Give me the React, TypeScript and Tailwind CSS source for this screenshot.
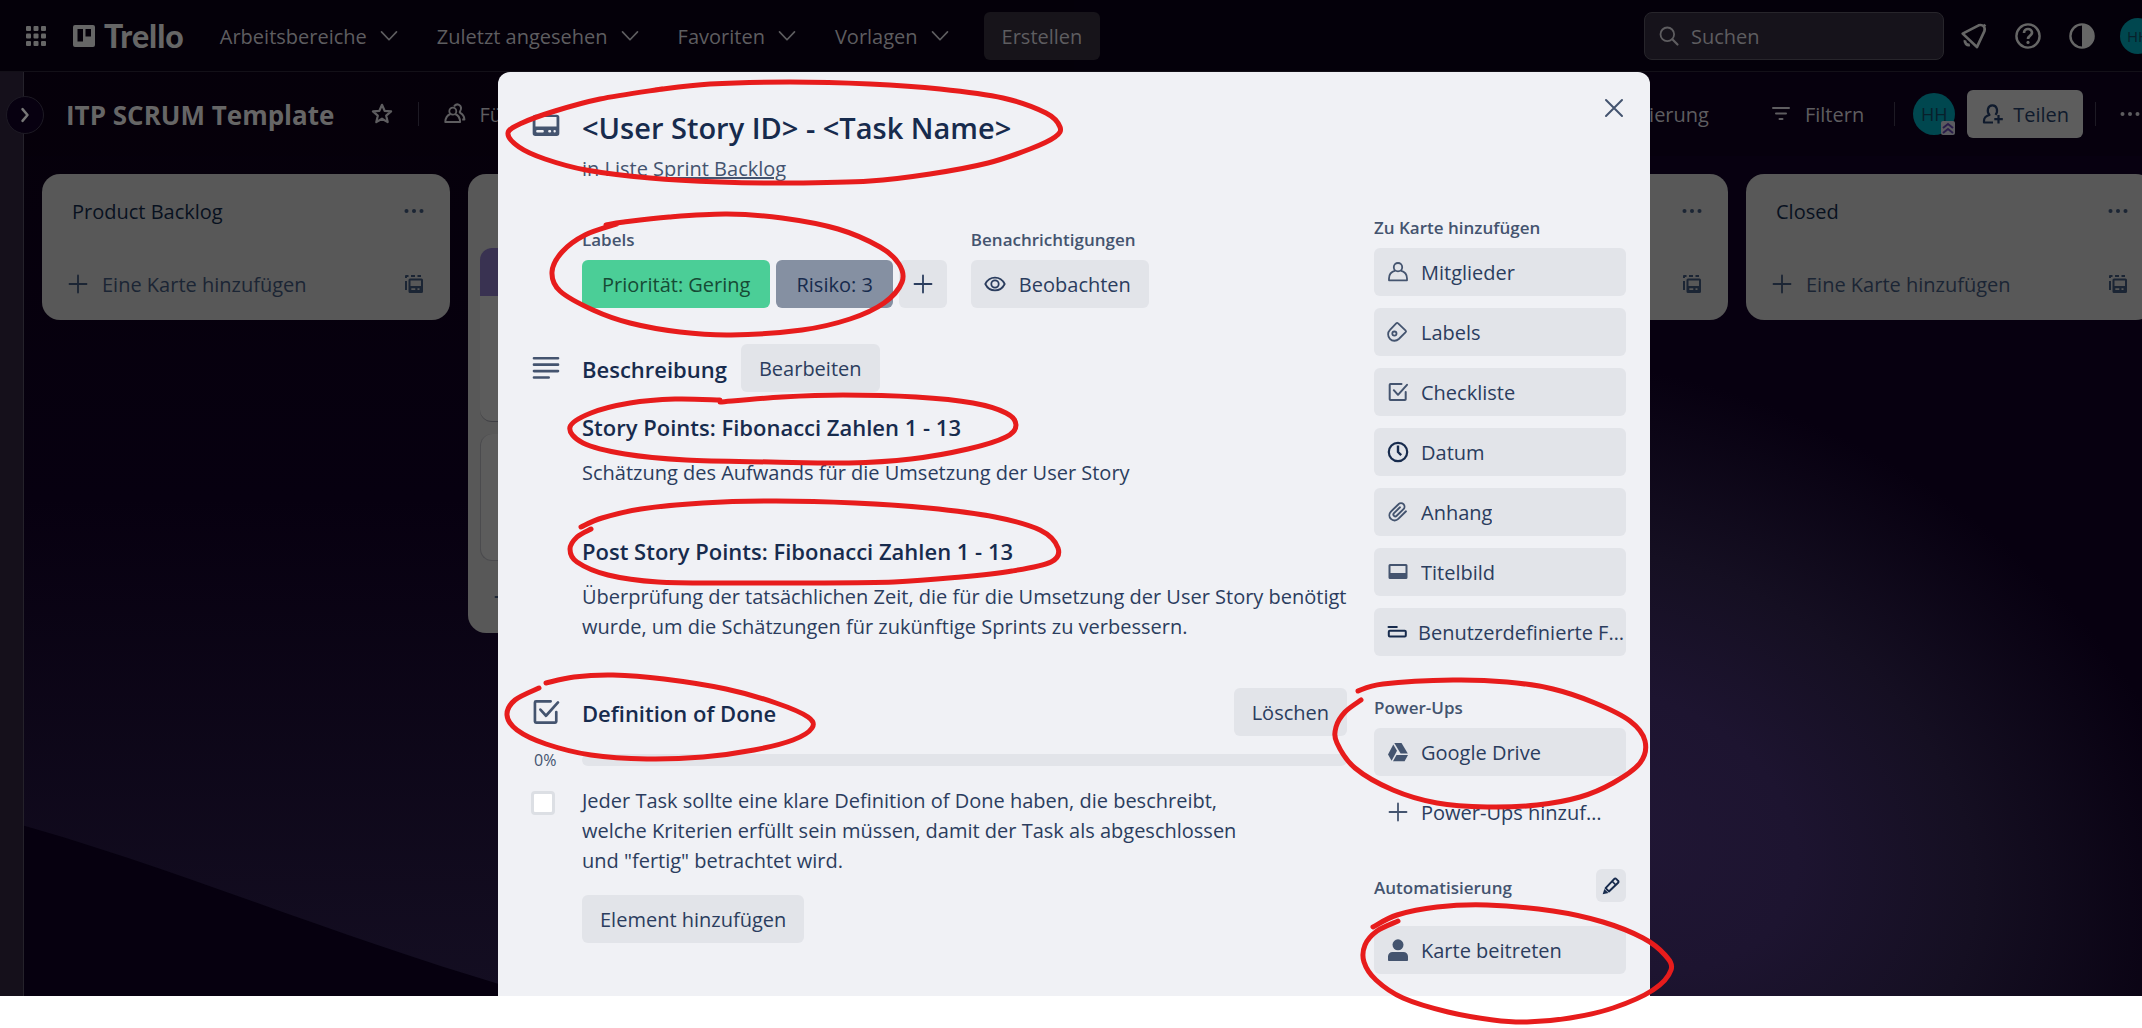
import type { ReactNode } from "react";

type IconProps = { className?: string };

function Svg({ className = "size-6", children }: { className?: string; children: ReactNode }) {
  return (
    <svg viewBox="0 0 24 24" fill="none" stroke="currentColor" strokeWidth="1.8" strokeLinejoin="round" className={`${className} shrink-0`} aria-hidden="true">
      {children}
    </svg>
  );
}

const Chevron = () => (
  <Svg className="size-5">
    <path d="M3 7l9 9.5L21 7" strokeLinecap="round" strokeWidth="2" />
  </Svg>
);

const AppGrid = () => (
  <Svg className="size-6">
    {[2, 9.5, 17].map((y) => [2, 9.5, 17].map((x) => <rect key={`${x}-${y}`} x={x} y={y} width="5" height="5" rx="1" fill="currentColor" stroke="none" />))}
  </Svg>
);

const TrelloMark = () => (
  <Svg className="size-6">
    <path fillRule="evenodd" fill="currentColor" stroke="none" d="M3 1h18a2 2 0 0 1 2 2v18a2 2 0 0 1-2 2H3a2 2 0 0 1-2-2V3a2 2 0 0 1 2-2zm2.5 4v12.5H11V5zm8 0v7.5H19V5z" />
  </Svg>
);

const CardIcon = ({ className = "size-8" }: IconProps) => (
  <Svg className={className}>
    <path fillRule="evenodd" fill="currentColor" stroke="none" d="M4 3.500h16a2 2 0 0 1 2 2v12a2 2 0 0 1-2 2H4a2 2 0 0 1-2-2v-12a2 2 0 0 1 2-2zm.1 1.800v7h15.800v-7zM5.500 15a.9.900 0 1 0 0 1.800h4a.9.900 0 1 0 0-1.800zm9 0a.9.900 0 1 0 0 1.800h.5a.9.900 0 1 0 0-1.800zm4 0a.9.900 0 1 0 0 1.800.9.900 0 0 0 0-1.800z" />
  </Svg>
);

const TemplateIcon = () => (
  <Svg className="size-6">
    <path d="M4 18V9M4 6V4h2.500M9 4h4M15.500 4H19" strokeWidth="2" />
    <path fillRule="evenodd" fill="currentColor" stroke="none" d="M8 6.500h11.500A1.500 1.500 0 0 1 21 8v11.500a1.500 1.500 0 0 1-1.500 1.500H8a1.500 1.500 0 0 1-1.500-1.500V8A1.500 1.500 0 0 1 8 6.500zm.5 2v5.500H19V8.500zm.8 7.700v1.800h4v-1.800zm6.200 0v1.800h2v-1.800z" />
  </Svg>
);

const Dots = () => (
  <Svg className="size-6">
    <g fill="currentColor" stroke="none">
      <circle cx="4.500" cy="12" r="2" />
      <circle cx="12" cy="12" r="2" />
      <circle cx="19.500" cy="12" r="2" />
    </g>
  </Svg>
);

const Plus = () => (
  <Svg className="size-6">
    <path d="M12 3.500v17M3.500 12h17" strokeLinecap="round" />
  </Svg>
);

const Star = () => (
  <Svg className="size-6">
    <path d="M12 2.800l2.600 6 6.500.6-4.900 4.300 1.500 6.400L12 16.700l-5.700 3.400 1.500-6.400-4.900-4.300 6.500-.6z" strokeWidth="2.200" />
  </Svg>
);

const People = () => (
  <Svg className="size-6">
    <circle cx="9.800" cy="9.200" r="3.500" />
    <path d="M7.500 12C4.500 13 2.500 15.500 2.300 20h14.800c-.2-4.500-2-7-5-8" strokeWidth="2" />
    <path d="M11 4.500c1.200-2 3.200-2.500 5-1.700 2.200 1 2.700 4 1.200 6.200-.7 1-.6 1.500.4 2.200 2.400 1.400 3.600 3 3.800 6.300h-2.200" strokeWidth="2" />
  </Svg>
);

const Filter = () => (
  <Svg className="size-6">
    <path d="M4 6h16M7 11.500h10M10.500 17h3" strokeWidth="2" strokeLinecap="round" />
  </Svg>
);

const ShareUser = () => (
  <Svg className="size-6">
    <path d="M12 20.500H3v-1.800c0-3 2-4.700 5.500-5.700-3-3.500-2-9.500 2.800-9.700 5-.1 6 6 3.200 9.600M17.500 13v8.500M13.300 17.200h8.500" strokeWidth="2.200" />
  </Svg>
);

const Search = () => (
  <Svg className="size-6">
    <circle cx="10.300" cy="10.300" r="6.800" />
    <path d="M15.300 15.300l5.200 5.200" strokeWidth="2.200" strokeLinecap="round" />
  </Svg>
);

const Bell = () => (
  <Svg className="size-8">
    <path d="M3.500 10.200l12-6.200c3-1 5.200 1.200 4.300 4.300L14.200 20.300z" strokeWidth="2" />
    <path d="M5.300 15.200c-.6 2 1.400 4 3.600 3.500" strokeWidth="2.200" />
    <path d="M19 5l1.500-1.500" strokeWidth="2" />
  </Svg>
);

const Help = () => (
  <Svg className="size-8">
    <circle cx="12" cy="12" r="8.700" />
    <path d="M9 9.800c0-4 6-4 6-.2 0 2.200-3 2-3 4.700" strokeWidth="2" />
    <circle cx="12" cy="16.800" r="1.200" fill="currentColor" stroke="none" />
  </Svg>
);

const Contrast = () => (
  <Svg className="size-8">
    <circle cx="12" cy="12" r="8.700" />
    <path d="M12 3.500a8.500 8.500 0 0 1 0 17z" fill="currentColor" stroke="none" />
  </Svg>
);

const Member = () => (
  <Svg>
    <circle cx="12" cy="7.200" r="4.200" />
    <path d="M9.300 10.600C5.500 11.600 3 14.600 3 18.400v1.900h18v-1.900c0-3.800-2.500-6.800-6.300-7.800" />
  </Svg>
);

const Tag = () => (
  <Svg>
    <path d="M10.200 3.300a1.300 1.300 0 0 1 1.900 0l7.600 7.300a1 1 0 0 1 0 1.500l-6.900 6.900a6.300 6.300 0 0 1-8.900-.2 6.300 6.300 0 0 1 .1-8.900z" />
    <circle cx="8.400" cy="13.600" r="2.100" />
  </Svg>
);

const Check = ({ className = "size-6" }: IconProps) => (
  <Svg className={className}>
    <path d="M15.500 4H4.500a.8.800 0 0 0-.8.800v14.400c0 .5.300.8.800.8h14.400c.5 0 .8-.3.800-.8V12" strokeWidth="2" strokeLinecap="round" />
    <path d="M7.800 10.200l4.200 4.600 9-10" strokeWidth="2" strokeLinecap="round" />
  </Svg>
);

const Clock = () => (
  <Svg className="size-6 text-[#172b4d]">
    <circle cx="12" cy="12" r="9.200" strokeWidth="2.200" />
    <path d="M12 5.500V12l3.200 3.200" strokeWidth="2.400" />
  </Svg>
);

const Clip = () => (
  <Svg>
    <path d="M20 11.300l-7.700 7.600a5.200 5.200 0 0 1-7.400 0 5.200 5.200 0 0 1 0-7.300l7.600-7.400a3.500 3.500 0 0 1 5 0 3.500 3.500 0 0 1 0 4.900l-6.800 6.700a1.900 1.900 0 0 1-2.700-2.700l6-5.800" strokeLinecap="round" strokeWidth="1.900" />
  </Svg>
);

const Cover = () => (
  <Svg>
    <path fillRule="evenodd" fill="currentColor" stroke="none" d="M4 4h16a1.500 1.500 0 0 1 1.500 1.500v12A1.500 1.500 0 0 1 20 19H4a1.500 1.500 0 0 1-1.500-1.500v-12A1.500 1.500 0 0 1 4 4zm.5 2v7h15V6z" />
  </Svg>
);

const Fields = () => (
  <Svg className="size-6 text-[#172b4d]">
    <path d="M2.500 7h8.300" strokeWidth="2" strokeLinecap="round" />
    <rect x="2.800" y="10.800" width="17" height="5.800" rx="1" strokeWidth="2" />
  </Svg>
);

const Drive = () => (
  <Svg className="size-6">
    <g fill="currentColor" stroke="none">
      <path d="M8.300 3h7.200l6.300 10.600h-7.200z" />
      <path d="M7.300 4.500l3.700 6.200-5.400 10L2 14.500z" />
      <path d="M10.500 15H22l-3.400 6.200H7z" />
    </g>
  </Svg>
);

const Person = () => (
  <Svg className="size-6">
    <g fill="currentColor" stroke="none">
      <circle cx="12" cy="6.800" r="5.500" />
      <path d="M2 22v-3.500a4.500 4.500 0 0 1 4.500-4.500h11a4.500 4.500 0 0 1 4.500 4.500V22a.9.900 0 0 1-1 .9H3a.9.900 0 0 1-1-.9z" />
    </g>
  </Svg>
);

const Pencil = () => (
  <Svg className="size-5">
    <path d="M5.500 14.500L16 3.500a1.500 1.500 0 0 1 2.200 0l2.300 2.300a1.500 1.500 0 0 1 0 2.200L9.500 18.500z" strokeWidth="2.400" />
    <path d="M4 15.500l5 5L2 22z" fill="currentColor" stroke="none" />
    <path d="M13.500 6.500l4 4" strokeWidth="2" />
  </Svg>
);

const Eye = () => (
  <Svg>
    <path d="M2.300 12C6.500 3.500 17.500 3.500 21.700 12 17.500 20.500 6.500 20.500 2.300 12z" />
    <circle cx="12" cy="12" r="3.700" />
  </Svg>
);

const Lines = () => (
  <Svg className="size-8">
    <path d="M3 4.700h18M3 9.500h18M3 14.300h18M3 19.100h11" strokeWidth="2" strokeLinecap="round" />
  </Svg>
);

const Close = () => (
  <Svg>
    <path d="M4 4l16 16M20 4L4 20" strokeWidth="2" strokeLinecap="round" />
  </Svg>
);

function Backdrop() {
  return (
    <svg viewBox="0 0 2142 996" preserveAspectRatio="none" className="absolute inset-0 size-full" aria-hidden="true">
      <defs>
        <linearGradient id="sky" x1="0" y1="0" x2="0" y2="1">
          <stop offset="0" stopColor="#050009" />
          <stop offset="0.500" stopColor="#070010" />
          <stop offset="1" stopColor="#140e22" />
        </linearGradient>
        <radialGradient id="glow" gradientUnits="userSpaceOnUse" cx="0" cy="0" r="1" gradientTransform="translate(1620 830) rotate(22) scale(610 450)">
          <stop offset="0" stopColor="#201634" />
          <stop offset="0.300" stopColor="#1d1430" />
          <stop offset="0.600" stopColor="#150f22" />
          <stop offset="1" stopColor="#070010" />
        </radialGradient>
      </defs>
      <rect width="2142" height="996" fill="url(#sky)" />
      <path d="M0 819C180 868 340 940 540 996H0z" fill="#06000f" />
      <rect x="1074" y="0" width="1068" height="996" fill="url(#glow)" />
    </svg>
  );
}

function NavItem({ children }: { children: string }) {
  return (
    <button className="flex items-center gap-3">
      <span className="pt-0.5">{children}</span>
      <Chevron />
    </button>
  );
}

function Avatar({ className }: IconProps) {
  return <span className={`${className} flex shrink-0 items-center justify-center rounded-full bg-[#00474f] font-medium text-[#08202b]`}>HH</span>;
}

function List({ title, bare = false, children }: { title?: string; bare?: boolean; children?: ReactNode }) {
  return (
    <section className="flex w-[408px] shrink-0 flex-col rounded-[18px] bg-[#585858] text-[#1b2534]">
      <header className="flex h-[74px] items-center justify-between px-6 pl-[30px]">
        <h2 className="pt-0.5 font-medium text-[#08111f]">{title}</h2>
        <button aria-label="Listenaktionen">
          <Dots />
        </button>
      </header>
      {children}
      <footer className="flex h-[72px] items-center justify-between px-6">
        <button aria-label="Eine Karte hinzufügen" className="flex items-center gap-3">
          <Plus />
          {!bare && <span className="pt-0.5">Eine Karte hinzufügen</span>}
        </button>
        <button aria-label="Aus Vorlage erstellen">
          <TemplateIcon />
        </button>
      </footer>
    </section>
  );
}

const Divider = () => <span className="h-6 w-px bg-[#1d1a24]" />;

function Board() {
  return (
    <div className="relative flex flex-col overflow-hidden text-[20px] leading-[30px] text-[#5e5d60] [grid-area:1/1]">
      <Backdrop />
      <nav className="relative flex h-[72px] items-center border-b border-[#131018] bg-[#040009]/80 pl-6">
        <button aria-label="Weitere Apps" className="text-[#666]">
          <AppGrid />
        </button>
        <a href="#" className="ml-6 flex items-center gap-2 text-[32px] leading-9 font-black text-[#666]">
          <TrelloMark />
          <span className="font-['Lato']">Trello</span>
        </a>
        <div className="ml-9 flex gap-[38px]">
          <NavItem>Arbeitsbereiche</NavItem>
          <NavItem>Zuletzt angesehen</NavItem>
          <NavItem>Favoriten</NavItem>
          <NavItem>Vorlagen</NavItem>
        </div>
        <button className="ml-[34px] h-12 rounded-md bg-[#17141a] px-[18px] pt-0.5">Erstellen</button>
        <label className="ml-auto flex h-12 w-[300px] shrink-0 items-center gap-2.5 rounded-lg border border-[#27252b] bg-[#16131b] px-3">
          <Search />
          <input aria-label="Suchen" placeholder="Suchen" className="w-full pt-0.5 outline-none placeholder:text-[#5e5d60]" />
        </label>
        <div className="-mr-[14px] ml-[14px] flex shrink-0 items-center gap-[22px] text-[#666]">
          <button aria-label="Mitteilungen"><Bell /></button>
          <button aria-label="Hilfe"><Help /></button>
          <button aria-label="Design"><Contrast /></button>
          <Avatar className="size-9 text-[15px]" />
        </div>
      </nav>
      <div className="relative flex flex-1">
        <aside className="w-6 shrink-0 border-r border-[#25222b] bg-[#15101b]">
          <button aria-label="Seitenleiste öffnen" className="absolute top-6 left-1.5 flex size-[38px] items-center justify-center rounded-full border border-[#1d1a24] bg-[#070010] text-[#777]">
            <Svg className="size-5">
              <path d="M9 5l6 7-6 7" strokeWidth="3" strokeLinecap="round" />
            </Svg>
          </button>
        </aside>
        <div className="min-w-0 flex-1">
          <header className="flex h-[84px] items-center justify-between bg-[#050009]/50 pl-[42px]">
            <div className="flex items-center gap-6">
              <h1 className="pt-0.5 text-[26px] leading-9 font-bold text-[#666]">ITP SCRUM Template</h1>
              <button aria-label="Favorit" className="ml-3"><Star /></button>
              <Divider />
              <button className="flex items-center gap-3"><People /><span className="pt-0.5">Für alle</span></button>
            </div>
            <div className="flex shrink-0 items-center">
              <button className="pt-0.5">Automatisierung</button>
              <span className="ml-[30px]"><Divider /></span>
              <button className="mr-[30px] ml-[30px] flex items-center gap-3"><Filter /><span className="pt-0.5">Filtern</span></button>
              <Divider />
              <span className="relative ml-[18px] flex">
                <Avatar className="size-[42px] text-lg" />
                <svg viewBox="0 0 14 14" className="absolute right-0 bottom-0 size-3.5" aria-hidden="true">
                  <rect width="14" height="14" rx="2" fill="#5b5b60" />
                  <path d="M2 7l5-4 5 4M2 12l5-4 5 4" fill="none" stroke="#2a1d4a" strokeWidth="2" />
                </svg>
              </span>
              <button className="mr-3 ml-3 flex h-12 items-center gap-2 rounded-md bg-[#5d5d5d] px-3.5 text-[#0f1a2c]"><ShareUser /><span className="pt-0.5">Teilen</span></button>
              <Divider />
              <button aria-label="Menü" className="ml-[22px]"><Dots /></button>
            </div>
          </header>
          <div className="mt-[18px] flex items-start gap-[18px] pl-[18px]">
            <List title="Product Backlog" />
            <List bare>
              <div className="mx-3 flex flex-col gap-3">
                <article className="h-[174px] overflow-hidden rounded-xl border-b border-[#3f3f44] bg-[#5c5c5c]">
                  <div className="h-12 bg-[#393251]" />
                </article>
                <article className="h-[127px] rounded-xl border-b border-l border-[#4b4b4e] bg-[#5c5c5c]" />
              </div>
            </List>
            <List bare />
            <List bare />
            <List title="Closed" />
          </div>
        </div>
      </div>
    </div>
  );
}

function Button({ children, label, className = "px-[18px] pt-0.5" }: { children: ReactNode; label?: string; className?: string }) {
  return (
    <button aria-label={label} className={`${className} h-12 shrink-0 rounded-md bg-[#e2e4e9] text-[#2b3d5e]`}>
      {children}
    </button>
  );
}

function SideButton({ icon, children, plain = false, tight = false }: { icon: ReactNode; children: string; plain?: boolean; tight?: boolean }) {
  return (
    <button className={`${plain ? "pr-[18px]" : "bg-[#e2e4e9]"} ${tight ? "gap-2" : "gap-[11px]"} flex h-12 w-full items-center rounded-md pl-3 text-left text-[#2b3d5e]`}>
      <span className="text-[#44546f]">{icon}</span>
      <span className="truncate pt-0.5">{children}</span>
    </button>
  );
}

function CardDialog() {
  return (
    <div role="dialog" aria-label="Karte" className="relative w-full max-w-[1152px] rounded-t-xl bg-[#f0f1f5] text-[20px] leading-[30px] text-[#2b3d5e]">
      <button aria-label="Schließen" className="absolute top-6 right-6 text-[#44546f]">
        <Close />
      </button>
      <header className="flex gap-5 pt-[38px] pl-8 text-[#44546f]">
        <CardIcon />
        <div>
          <h2 className="text-[29px] leading-9 font-semibold text-[#172b4d]">&lt;User Story ID&gt; - &lt;Task Name&gt;</h2>
          <p className="mt-2">
            in Liste <a href="#" className="underline">Sprint Backlog</a>
          </p>
        </div>
      </header>
      <div className="mt-[34px] flex gap-[27px] pr-6 pb-[22px]">
        <main className="min-w-0 flex-1 pt-3 pl-8">
          <div className="flex gap-6 pl-[52px]">
            <section>
              <h3 className="text-[17px] leading-5 font-semibold text-[#44546f]">Labels</h3>
              <div className="mt-2.5 flex gap-1.5">
                <button className="h-12 rounded-md bg-[#4bce97] px-5 pt-0.5 font-medium text-[#164b35]">Priorität: Gering</button>
                <button className="h-12 rounded-md bg-[#8590a2] px-5 pt-0.5 font-medium text-[#172b4d]">Risiko: 3</button>
                <Button label="Label hinzufügen" className="px-3">
                  <Plus />
                </Button>
              </div>
            </section>
            <section>
              <h3 className="text-[17px] leading-5 font-semibold text-[#44546f]">Benachrichtigungen</h3>
              <Button className="mt-2.5 flex items-center gap-3 pr-[18px] pl-3">
                <Eye />
                <span className="pt-0.5">Beobachten</span>
              </Button>
            </section>
          </div>
          <section className="mt-9">
            <header className="flex items-center text-[#44546f]">
              <Lines />
              <h3 className="mr-3.5 ml-5 pt-0.5 text-[22px] font-semibold text-[#172b4d]">Beschreibung</h3>
              <Button>Bearbeiten</Button>
            </header>
            <div className="mt-5 pl-[52px]">
              <h4 className="text-[22px] font-semibold text-[#172b4d]">Story Points: Fibonacci Zahlen 1 - 13</h4>
              <p className="mt-4">Schätzung des Aufwands für die Umsetzung der User Story</p>
              <h4 className="mt-12 text-[22px] font-semibold text-[#172b4d]">Post Story Points: Fibonacci Zahlen 1 - 13</h4>
              <p className="mt-4">Überprüfung der tatsächlichen Zeit, die für die Umsetzung der User Story benötigt wurde, um die Schätzungen für zukünftige Sprints zu verbessern.</p>
            </div>
          </section>
          <section className="mt-[46px]">
            <header className="flex items-center text-[#44546f]">
              <Check className="size-8" />
              <h3 className="mr-auto ml-5 pt-0.5 text-[22px] font-semibold text-[#172b4d]">Definition of Done</h3>
              <Button>Löschen</Button>
            </header>
            <div className="mt-3 flex h-6 items-center">
              <span className="w-[52px] pl-1 text-base text-[#44546f]">0%</span>
              <div role="progressbar" aria-label="Fortschritt" aria-valuenow={0} className="h-3 flex-1 rounded-md bg-[#e2e4e9]" />
            </div>
            <div className="mt-3.5 flex">
              <input id="done" type="checkbox" className="mt-[5px] mr-[27px] ml-px size-6 shrink-0 appearance-none rounded border-[3px] border-[#dcdfe4] bg-white" />
              <label htmlFor="done" className="max-w-[660px]">
                Jeder Task sollte eine klare Definition of Done haben, die beschreibt, welche Kriterien erfüllt sein müssen, damit der Task als abgeschlossen und "fertig" betrachtet wird.
              </label>
            </div>
            <div className="mt-[19px] pl-[52px]">
              <Button>Element hinzufügen</Button>
            </div>
          </section>
        </main>
        <aside className="w-[252px] shrink-0">
          <h3 className="mb-2.5 text-[17px] leading-5 font-semibold text-[#44546f]">Zu Karte hinzufügen</h3>
          <div className="flex flex-col gap-3">
            <SideButton icon={<Member />}>Mitglieder</SideButton>
            <SideButton icon={<Tag />}>Labels</SideButton>
            <SideButton icon={<Check />}>Checkliste</SideButton>
            <SideButton icon={<Clock />}>Datum</SideButton>
            <SideButton icon={<Clip />}>Anhang</SideButton>
            <SideButton icon={<Cover />}>Titelbild</SideButton>
            <SideButton tight icon={<Fields />}>Benutzerdefinierte Felder</SideButton>
          </div>
          <h3 className="mt-[42px] mb-2.5 text-[17px] leading-5 font-semibold text-[#44546f]">Power-Ups</h3>
          <div className="flex flex-col gap-3">
            <SideButton icon={<Drive />}>Google Drive</SideButton>
            <SideButton plain icon={<Plus />}>Power-Ups hinzufügen</SideButton>
          </div>
          <header className="mt-[33px] mb-6 flex items-center justify-between">
            <h3 className="pt-1 text-[17px] leading-5 font-semibold text-[#44546f]">Automatisierung</h3>
            <button aria-label="Automatisierung bearbeiten" className="flex h-[33px] w-[30px] items-center justify-center rounded-md bg-[#e2e4e9] text-[#172b4d]">
              <Pencil />
            </button>
          </header>
          <SideButton icon={<Person />}>Karte beitreten</SideButton>
        </aside>
      </div>
    </div>
  );
}

type Point = [number, number];

const strokes: Point[][] = [
  [[662, 89], [600, 99], [555, 111], [522, 123], [508, 133], [519, 147], [545, 159], [586, 170], [650, 178], [720, 182], [790, 183], [870, 181], [930, 174], [988, 163], [1030, 149], [1055, 137], [1060, 127], [1046, 113], [1003, 98], [940, 89], [870, 84], [790, 82], [710, 84], [655, 90]],
  [[617, 224], [585, 235], [562, 252], [552, 272], [560, 291], [593, 310], [630, 323], [680, 332], [731, 335], [802, 330], [850, 319], [884, 303], [902, 282], [899, 264], [880, 247], [838, 229], [782, 218], [727, 214], [669, 217], [624, 222], [606, 225]],
  [[720, 400], [675, 399], [630, 403], [591, 413], [570, 427], [583, 443], [625, 454], [686, 460], [771, 462], [849, 463], [911, 459], [968, 449], [1006, 437], [1016, 425], [1006, 413], [973, 403], [916, 397], [843, 395], [782, 397], [720, 402]],
  [[581, 527], [602, 518], [641, 509], [703, 503], [776, 501], [855, 503], [928, 508], [995, 517], [1040, 530], [1058, 548], [1051, 562], [1012, 571], [961, 577], [894, 582], [804, 583], [731, 583], [658, 582], [608, 575], [577, 562], [570, 549], [577, 537], [591, 529]],
  [[546, 683], [574, 677], [613, 675], [664, 679], [726, 689], [776, 703], [808, 717], [812, 728], [793, 740], [754, 750], [703, 757], [647, 759], [591, 755], [546, 744], [517, 730], [507, 715], [515, 700], [539, 688]],
  [[1358, 691], [1383, 684], [1453, 680], [1507, 682], [1553, 689], [1595, 703], [1630, 721], [1645, 741], [1640, 763], [1613, 783], [1580, 797], [1537, 805], [1487, 807], [1437, 803], [1393, 790], [1355, 768], [1337, 743], [1336, 727], [1345, 712], [1361, 700]],
  [[1398, 921], [1377, 931], [1365, 945], [1364, 962], [1376, 980], [1403, 998], [1448, 1012], [1493, 1020], [1527, 1022], [1570, 1018], [1613, 1008], [1653, 990], [1671, 970], [1665, 955], [1643, 938], [1603, 922], [1553, 911], [1487, 905], [1437, 907], [1397, 915], [1373, 927]],
];

function smooth(points: Point[]) {
  let d = `M${points[0][0]} ${points[0][1]}`;
  for (let i = 0; i < points.length - 1; i++) {
    const a = points[Math.max(i - 1, 0)];
    const b = points[i];
    const c = points[i + 1];
    const e = points[Math.min(i + 2, points.length - 1)];
    d += `C${b[0] + (c[0] - a[0]) / 6} ${b[1] + (c[1] - a[1]) / 6} ${c[0] - (e[0] - b[0]) / 6} ${c[1] - (e[1] - b[1]) / 6} ${c[0]} ${c[1]}`;
  }
  return d;
}

export default function App() {
  return (
    <div className="relative overflow-hidden bg-white pb-8 font-['Open_Sans','Noto_Sans',sans-serif]">
      <div className="grid grid-cols-[minmax(0,1fr)]">
        <Board />
        <div className="flex justify-center pt-[72px] pl-1.5 [grid-area:1/1]">
          <CardDialog />
        </div>
      </div>
      <svg viewBox="0 0 2142 1028" className="pointer-events-none absolute top-0 left-0 w-full" fill="none" stroke="#e71c1c" strokeWidth="5" strokeLinecap="round" aria-hidden="true">
        {strokes.map((points, i) => (
          <path key={i} d={smooth(points)} />
        ))}
      </svg>
    </div>
  );
}
